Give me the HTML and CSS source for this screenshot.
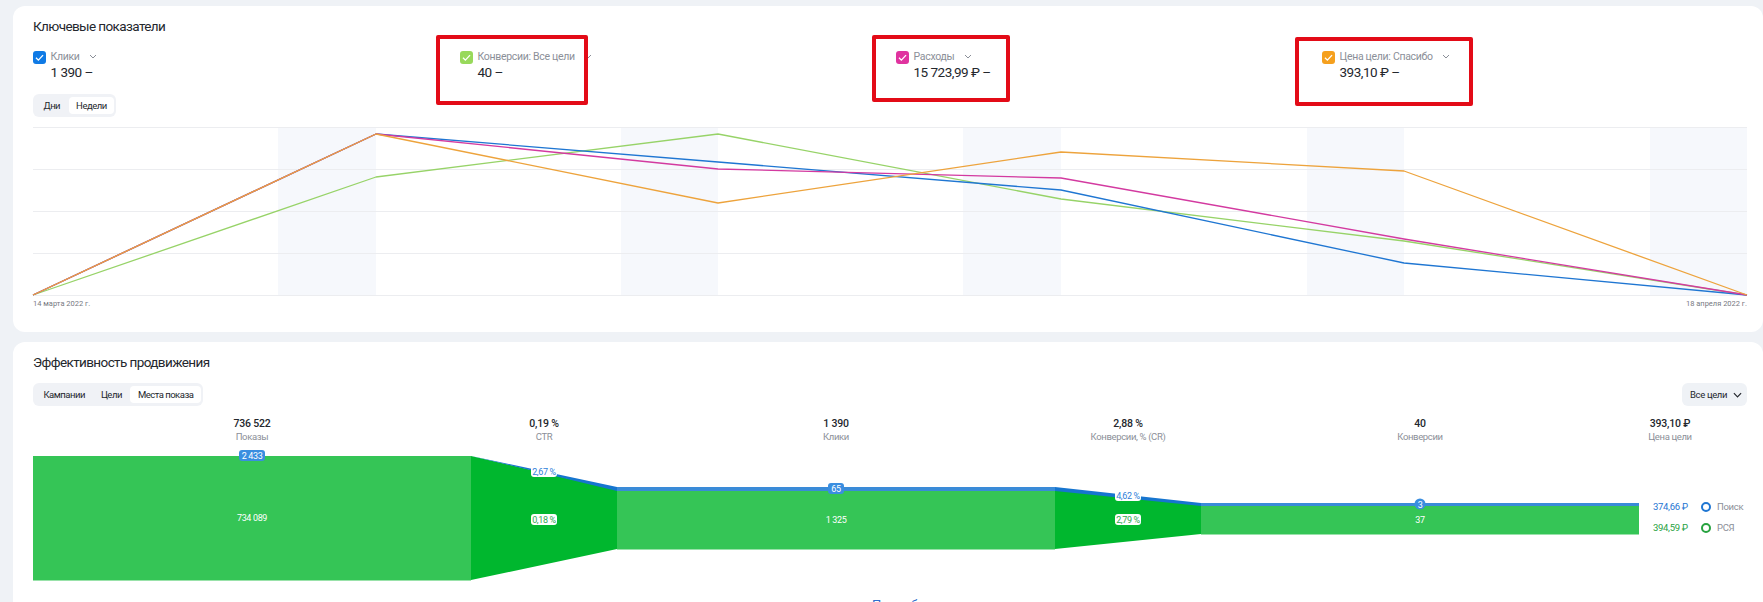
FILE: index.html
```html
<!DOCTYPE html>
<html lang="ru">
<head>
<meta charset="utf-8">
<title>Ключевые показатели</title>
<link rel="stylesheet" href="styles.css">
</head>
<body>
<main class="page">
  <section class="card card-kpi">
    <h2 class="card-title">Ключевые показатели</h2>
    <div class="kpis">
      <div class="kpi">
        <span class="check check-blue"><svg viewBox="0 0 14 14"><path d="M3.2 7.2l2.6 2.6 5-5.4"/></svg></span>
        <div class="kpi-body">
          <div class="kpi-label">Клики <svg class="chev" viewBox="0 0 8 5"><path d="M1 1l3 3 3-3"/></svg></div>
          <div class="kpi-value">1 390 –</div>
        </div>
      </div>
      <div class="kpi">
        <span class="check check-green"><svg viewBox="0 0 14 14"><path d="M3.2 7.2l2.6 2.6 5-5.4"/></svg></span>
        <div class="kpi-body">
          <div class="kpi-label">Конверсии: Все цели <svg class="chev" viewBox="0 0 8 5"><path d="M1 1l3 3 3-3"/></svg></div>
          <div class="kpi-value">40 –</div>
        </div>
      </div>
      <div class="kpi">
        <span class="check check-pink"><svg viewBox="0 0 14 14"><path d="M3.2 7.2l2.6 2.6 5-5.4"/></svg></span>
        <div class="kpi-body">
          <div class="kpi-label">Расходы <svg class="chev" viewBox="0 0 8 5"><path d="M1 1l3 3 3-3"/></svg></div>
          <div class="kpi-value">15 723,99 ₽ –</div>
        </div>
      </div>
      <div class="kpi">
        <span class="check check-orange"><svg viewBox="0 0 14 14"><path d="M3.2 7.2l2.6 2.6 5-5.4"/></svg></span>
        <div class="kpi-body">
          <div class="kpi-label">Цена цели: Спасибо <svg class="chev" viewBox="0 0 8 5"><path d="M1 1l3 3 3-3"/></svg></div>
          <div class="kpi-value">393,10 ₽ –</div>
        </div>
      </div>
    </div>
    <div class="seg seg-small">
      <span class="seg-item">Дни</span>
      <span class="seg-item seg-active">Недели</span>
    </div>
    <svg class="line-chart" viewBox="33 127 1714 184" width="1714" height="184">
      <g class="bands">
        <rect x="278" y="127" width="98" height="168"/>
        <rect x="621" y="127" width="97" height="168"/>
        <rect x="963" y="127" width="98" height="168"/>
        <rect x="1307" y="127" width="97" height="168"/>
        <rect x="1650" y="127" width="97" height="168"/>
      </g>
      <g class="grid">
        <path d="M33 127.5H1747M33 169.5H1747M33 211.5H1747M33 253.5H1747M33 295.5H1747"/>
      </g>
      <polyline class="ln ln-green" points="33,295 376,177 718,134 1061,199 1404,241 1747,295"/>
      <polyline class="ln ln-blue" points="33,295 376,134 718,162 1061,190 1404,263 1747,295"/>
      <polyline class="ln ln-pink" points="33,295 376,134 718,169 1061,178 1404,239 1747,295"/>
      <polyline class="ln ln-orange" points="33,295 376,134 718,203 1061,152 1404,171 1747,295"/>
      <text class="axis" x="33" y="306">14 марта 2022 г.</text>
      <text class="axis axis-end" x="1747" y="306">18 апреля 2022 г.</text>
    </svg>
    <div class="mark mark-1"></div>
    <div class="mark mark-2"></div>
    <div class="mark mark-3"></div>
  </section>

  <section class="card card-funnel">
    <h2 class="card-title">Эффективность продвижения</h2>
    <div class="funnel-bar">
      <div class="seg seg-big">
        <span class="seg-item">Кампании</span>
        <span class="seg-item">Цели</span>
        <span class="seg-item seg-active">Места показа</span>
      </div>
      <div class="select">Все цели <svg class="sel-chev" viewBox="0 0 10 6"><path d="M1 1l4 4 4-4"/></svg></div>
    </div>
    <div class="metrics">
      <div class="metric"><b>736 522</b><span>Показы</span></div>
      <div class="metric"><b>0,19 %</b><span>CTR</span></div>
      <div class="metric"><b>1 390</b><span>Клики</span></div>
      <div class="metric"><b>2,88 %</b><span>Конверсии, % (CR)</span></div>
      <div class="metric"><b>40</b><span>Конверсии</span></div>
      <div class="metric"><b>393,10 ₽</b><span>Цена цели</span></div>
    </div>
    <svg class="funnel" viewBox="33 450 1714 140" width="1714" height="140">
      <polygon class="f-dark" points="471,456 617,490 617,549 471,580"/>
      <polygon class="f-dark" points="1055,490 1201,505 1201,534 1055,549"/>
      <polygon class="f-blue-dark" points="471,456 617,487 617,491"/>
      <polygon class="f-blue-dark" points="1055,487 1201,503 1201,506 1055,491"/>
      <rect class="f-main" x="33" y="456" width="438" height="124.500"/>
      <rect class="f-main" x="617" y="490" width="438" height="59.500"/>
      <rect class="f-main" x="1201" y="505" width="438" height="29.500"/>
      <rect class="f-blue" x="617" y="487" width="438" height="4"/>
      <rect class="f-blue" x="1201" y="503" width="438" height="3"/>

      <rect class="chip-blue" x="239" y="450" width="26" height="11" rx="3"/>
      <text class="t-w" x="252" y="459">2 433</text>
      <text class="t-w" x="252" y="521">734 089</text>

      <rect class="chip-white" x="531" y="466" width="26" height="11" rx="3"/>
      <text class="t-b" x="544" y="475">2,67 %</text>
      <rect class="chip-white" x="531" y="514" width="26" height="11" rx="3"/>
      <text class="t-g" x="544" y="523">0,18 %</text>

      <rect class="chip-blue" x="828" y="483" width="16" height="11" rx="3"/>
      <text class="t-w" x="836" y="492">65</text>
      <text class="t-w" x="836" y="523">1 325</text>

      <rect class="chip-white" x="1115" y="490" width="26" height="11" rx="3"/>
      <text class="t-b" x="1128" y="499">4,62 %</text>
      <rect class="chip-white" x="1115" y="514" width="26" height="11" rx="3"/>
      <text class="t-g" x="1128" y="523">2,79 %</text>

      <circle class="chip-blue" cx="1420" cy="504" r="5.500"/>
      <text class="t-w" x="1420" y="507.500">3</text>
      <text class="t-w" x="1420" y="523">37</text>
    </svg>
    <div class="legend">
      <div class="legend-row"><span class="price price-blue">374,66 ₽</span><i class="ring ring-blue"></i><span class="legend-name">Поиск</span></div>
      <div class="legend-row"><span class="price price-green">394,59 ₽</span><i class="ring ring-green"></i><span class="legend-name">РСЯ</span></div>
    </div>
    <div class="more">Подробнее</div>
  </section>
</main>
</body>
</html>
```
FILE: styles.css
```css
* { box-sizing: border-box; }
html, body { margin: 0; height: 100%; }
body {
  width: 1763px;
  height: 602px;
  overflow: hidden;
  background: #eff2f6;
  font-family: "Roboto", "Liberation Sans", sans-serif;
  color: #24272d;
}
.page {
  display: flex;
  flex-direction: column;
  gap: 10px;
  padding: 6px 0 0 13px;
}
.card {
  position: relative;
  width: 1750px;
  background: #fff;
  border-radius: 12px;
  padding: 12px 20px 0;
}
.card-kpi { height: 326px; }
.card-funnel { height: 260px; border-radius: 12px 12px 0 0; overflow: hidden; }
.card-title {
  margin: 0;
  font-size: 13.500px;
  line-height: 16px;
  font-weight: 400;
  letter-spacing: -0.6px;
}
.kpis {
  display: grid;
  grid-template-columns: 427px 436px 426px auto;
  margin-top: 16px;
  height: 37px;
}
.kpi { display: flex; gap: 4.500px; }
.check {
  display: block;
  width: 13px;
  height: 13px;
  border-radius: 3px;
  margin-top: 1px;
  flex: none;
}
.check svg { display: block; width: 13px; height: 13px; fill: none; stroke: #fff; stroke-width: 1.400; }
.check-blue { background: #0f7ae5; }
.check-green { background: #98d95b; }
.check-pink { background: #e0339f; }
.check-orange { background: #f5a01e; }
.kpi-label {
  font-size: 10.500px;
  line-height: 13px;
  color: #8b8f98;
  letter-spacing: -0.3px;
  white-space: nowrap;
}
.chev { width: 8px; height: 5px; margin-left: 7px; vertical-align: 1px; fill: none; stroke: #8b8f98; stroke-width: 1; }
.kpi-value {
  font-size: 13.500px;
  line-height: 17px;
  margin-top: 1px;
  letter-spacing: -0.5px;
  white-space: nowrap;
}
.seg {
  display: inline-flex;
  gap: 1px;
  background: #f0f2f6;
  border-radius: 6px;
  padding: 3px 2px 3px 3px;
  font-size: 9.500px;
  line-height: 17px;
  letter-spacing: -0.5px;
}
.seg-small { margin-top: 7px; height: 23px; }
.seg-big { height: 23px; }
.seg-item { padding: 0 7.500px; white-space: nowrap; }
.seg-active { background: #fff; border-radius: 4px; }
.line-chart { display: block; margin-top: 10px; overflow: visible; }
.bands rect { fill: #f6f8fc; }
.grid path { fill: none; stroke: #ecedf0; stroke-width: 1; }
.ln { fill: none; stroke-width: 1.300; stroke-linejoin: round; }
.ln-green { stroke: #97d368; }
.ln-blue { stroke: #1f76d2; }
.ln-pink { stroke: #d33aa0; }
.ln-orange { stroke: #eda33c; }
.axis { font-size: 7.500px; fill: #77797f; }
.axis-end { text-anchor: end; }
.mark {
  position: absolute;
  border: 4px solid #e30b17;
  border-radius: 2px;
}
.mark-1 { left: 423px; top: 29px; width: 152px; height: 70px; }
.mark-2 { left: 859px; top: 29px; width: 138px; height: 67px; }
.mark-3 { left: 1282px; top: 31px; width: 178px; height: 69px; }
.funnel-bar {
  display: flex;
  justify-content: space-between;
  margin: 13px -4px 0 0;
}
.select {
  display: flex;
  align-items: center;
  gap: 6px;
  height: 23px;
  width: 65px;
  background: #eff2f6;
  border-radius: 6px;
  font-size: 9.500px;
  letter-spacing: -0.35px;
  padding-left: 8px;
  white-space: nowrap;
}
.sel-chev { width: 9px; height: 6px; flex: none; fill: none; stroke: #24272d; stroke-width: 1.300; }
.metrics {
  display: grid;
  grid-template-columns: 438px 146px 438px 146px 438px 62px;
  margin-top: 11px;
  height: 33px;
  text-align: center;
}
.metric b {
  display: block;
  font-weight: 500;
  font-size: 10.500px;
  line-height: 13px;
  letter-spacing: -0.2px;
  white-space: nowrap;
}
.metric span {
  display: block;
  font-size: 9.500px;
  line-height: 14px;
  letter-spacing: -0.35px;
  color: #8b8f98;
  white-space: nowrap;
}
.funnel { display: block; position: absolute; left: 20px; top: 108px; }
.f-main { fill: #35c556; }
.f-dark { fill: #00b72e; }
.f-blue { fill: #3a8bd8; }
.f-blue-dark { fill: #1675cf; }
.chip-blue { fill: #3a8ee0; }
.chip-white { fill: #fff; }
.funnel text { font-size: 9px; letter-spacing: -0.35px; text-anchor: middle; }
.t-w { fill: #fff; }
.t-b { fill: #2f7fd9; }
.t-g { fill: #2fa84f; }
.legend {
  position: absolute;
  left: 1640px;
  top: 158px;
  display: flex;
  flex-direction: column;
  gap: 9px;
}
.legend-row { display: flex; align-items: center; height: 12px; font-size: 9.500px; letter-spacing: -0.3px; }
.price { width: 48px; white-space: nowrap; }
.price-blue { color: #1f76d2; }
.price-green { color: #27a23f; }
.ring { width: 10px; height: 10px; border-radius: 50%; border: 2.500px solid; margin-right: 6px; margin-top: 2px; }
.ring-blue { border-color: #1f76d2; }
.ring-green { border-color: #27a23f; }
.legend-name { color: #8b8f98; }
.more {
  position: absolute;
  left: 859px;
  top: 256px;
  font-size: 13px;
  line-height: 14px;
  color: #2f6fce;
}
```
